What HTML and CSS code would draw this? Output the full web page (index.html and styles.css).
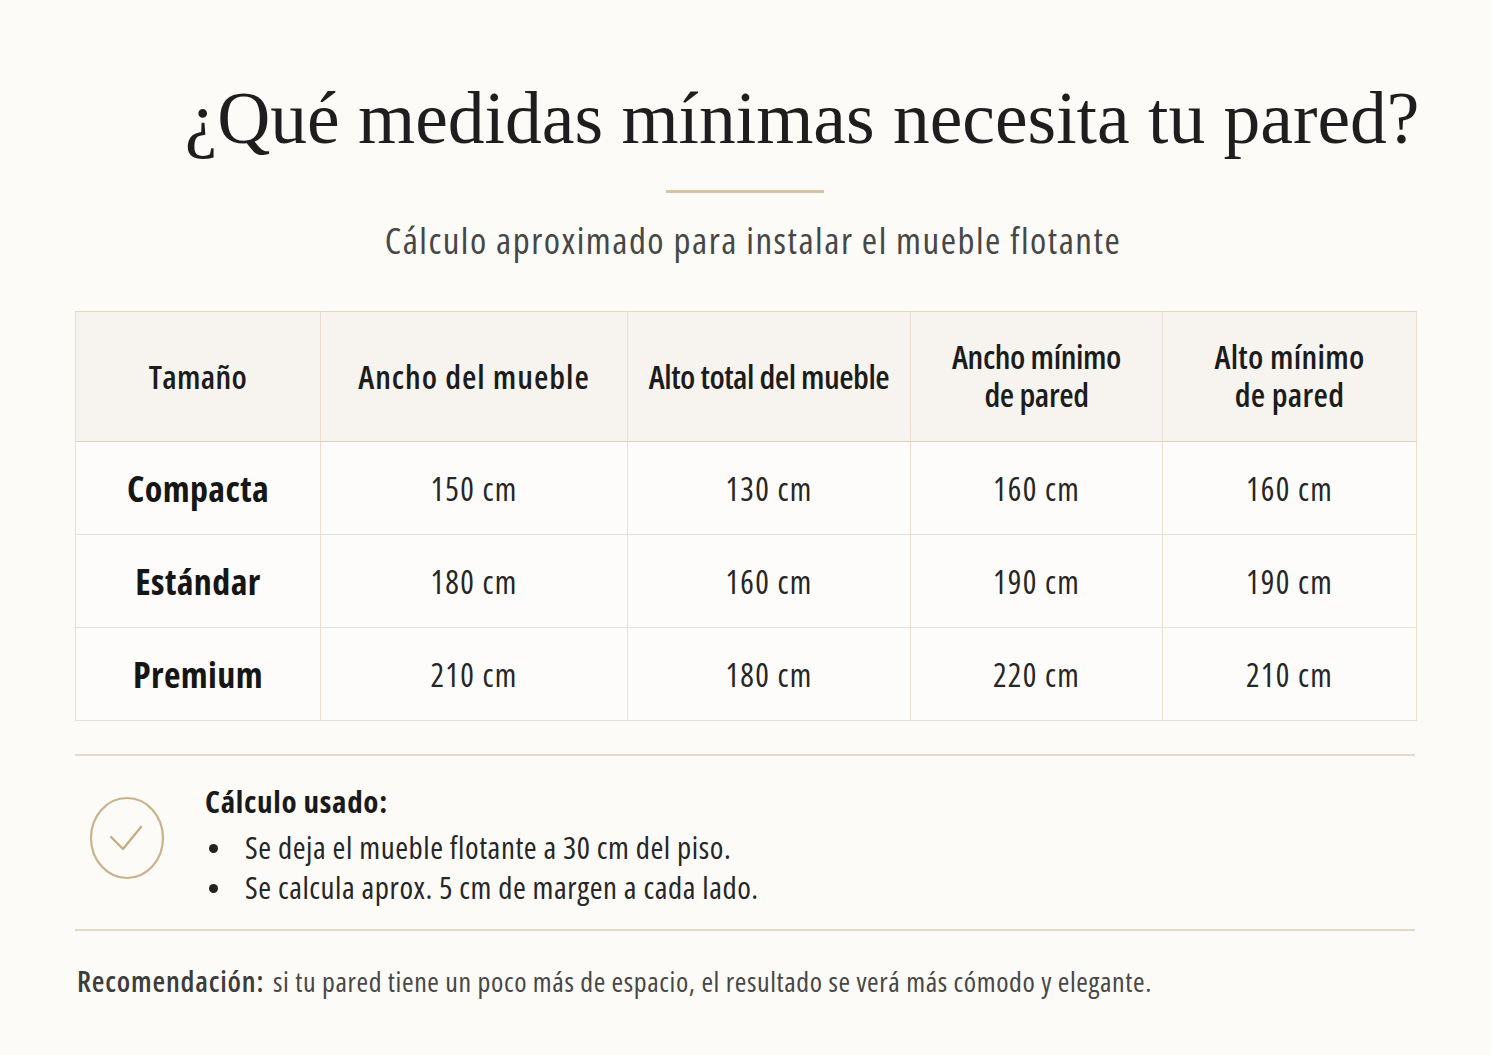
FILE: index.html
```html
<!DOCTYPE html>
<html lang="es">
<head>
<meta charset="utf-8">
<title>Medidas mínimas de pared</title>
<link rel="stylesheet" href="styles.css">
</head>
<body>
<main class="page">
  <header class="hero">
    <h1 class="title">¿Qué medidas mínimas necesita tu pared?</h1>
    <div class="divider"></div>
    <p class="subtitle">Cálculo aproximado para instalar el mueble flotante</p>
  </header>

  <table class="sizes">
    <colgroup>
      <col class="c1"><col class="c2"><col class="c3"><col class="c4"><col class="c5">
    </colgroup>
    <thead>
      <tr>
        <th>Tamaño</th>
        <th class="wide">Ancho del mueble</th>
        <th class="tight">Alto total del mueble</th>
        <th><span class="wrap w1">Ancho mínimo de pared</span></th>
        <th><span class="wrap w2">Alto mínimo de pared</span></th>
      </tr>
    </thead>
    <tbody>
      <tr><td class="name">Compacta</td><td>150 cm</td><td>130 cm</td><td>160 cm</td><td>160 cm</td></tr>
      <tr><td class="name">Estándar</td><td>180 cm</td><td>160 cm</td><td>190 cm</td><td>190 cm</td></tr>
      <tr><td class="name">Premium</td><td>210 cm</td><td>180 cm</td><td>220 cm</td><td>210 cm</td></tr>
    </tbody>
  </table>

  <section class="note">
    <div class="check">
      <svg width="78" height="84" viewBox="0 0 78 84">
        <ellipse cx="39" cy="42" rx="36" ry="40" fill="none" stroke="#cbb28c" stroke-width="2.2"/>
        <path d="M23 41 L35 53 L53 31" fill="none" stroke="#c7ad86" stroke-width="2.4" stroke-linecap="round" stroke-linejoin="round"/>
      </svg>
    </div>
    <div class="note-body">
      <h2 class="note-title">Cálculo usado:</h2>
      <ul class="note-list">
        <li>Se deja el mueble flotante a 30 cm del piso.</li>
        <li>Se calcula aprox. 5 cm de margen a cada lado.</li>
      </ul>
    </div>
  </section>

  <p class="reco"><strong>Recomendación:</strong> si tu pared tiene un poco más de espacio, el resultado se verá más cómodo y elegante.</p>
</main>
</body>
</html>
```

FILE: styles.css
```css
html, body {
  margin: 0;
  padding: 0;
  background: #fcfbf8;
}

body {
  font-family: "Open Sans", "Noto Sans", sans-serif;
  font-stretch: 75%;
  color: #1d1d1d;
}

.page {
  width: 1340px;
  margin: 0 0 0 75px;
}

.hero {
  display: flex;
  flex-direction: column;
  align-items: center;
}

.title {
  margin: 75px 0 0 0;
  padding-left: 114px;
  font-family: "Liberation Serif", "DejaVu Serif", serif;
  font-stretch: normal;
  font-weight: normal;
  font-size: 73.5px;
  line-height: 88px;
  color: #1e1e1e;
  white-space: nowrap;
}

.divider {
  width: 158px;
  height: 3px;
  background: #d6c3a3;
  margin-top: 27px;
}

.subtitle {
  margin: 24px 0 0 16px;
  font-size: 37px;
  letter-spacing: 1.5px;
  line-height: 46px;
  color: #474747;
}

.sizes {
  margin-top: 48px;
  width: 1341px;
  border-collapse: collapse;
  table-layout: fixed;
  background: #fdfcfa;
}

.c1 { width: 245px; }
.c2 { width: 307px; }
.c3 { width: 283px; }
.c4 { width: 252px; }
.c5 { width: 254px; }

.sizes th,
.sizes td {
  border: 1px solid #e8dfd1;
  text-align: center;
  vertical-align: middle;
  padding: 0;
}

.sizes thead th {
  background: #f7f4ef;
  height: 129px;
  font-size: 33px;
  letter-spacing: 0.3px;
  line-height: 40px;
  font-weight: 650;
  color: #1c1c1c;
  border-bottom-color: #ddd1bf;
}

.sizes thead th.wide {
  letter-spacing: 1px;
}

.sizes thead th.tight {
  letter-spacing: -0.5px;
}

.wrap {
  display: inline-block;
  line-height: 38px;
  padding-bottom: 2px;
}

.w1 { max-width: 185px; letter-spacing: -0.4px; }
.w2 { max-width: 165px; }

.sizes thead tr th {
  border-top-color: #e2d6c4;
}

.sizes tbody td {
  height: 92px;
  font-size: 32px;
  letter-spacing: 1.3px;
  color: #262626;
}

.sizes tbody td.name {
  font-weight: 700;
  font-size: 36px;
  letter-spacing: 0.4px;
  color: #161616;
}

.note {
  margin-top: 33px;
  border-top: 2px solid #e4d9c8;
  border-bottom: 2px solid #e4d9c8;
  display: flex;
  align-items: flex-start;
  padding: 25px 0 22px 13px;
}

.check {
  margin-top: 15px;
  width: 78px;
  height: 84px;
}

.check svg {
  display: block;
}

.note-body {
  margin-left: 39px;
}

.note-title {
  margin: 0;
  font-size: 31px;
  letter-spacing: 0.7px;
  line-height: 40px;
  font-weight: 700;
  color: #1a1a1a;
}

.note-list {
  list-style: none;
  margin: 6px 0 0 0;
  padding: 0;
  font-size: 31px;
  letter-spacing: 0.55px;
  line-height: 40px;
  color: #262626;
}

.note-list li {
  display: flex;
  align-items: center;
}

.note-list li::before {
  content: "";
  width: 9px;
  height: 9px;
  border-radius: 50%;
  background: #222;
  margin: 2px 27px 0 4px;
  flex: none;
}

.reco {
  margin: 32px 0 0 2px;
  font-size: 28px;
  letter-spacing: 0.6px;
  line-height: 36px;
  color: #474747;
}

.reco strong {
  font-weight: 650;
  font-size: 29px;
  letter-spacing: 0.8px;
  color: #3c3c3c;
  margin-right: 3px;
}
```
